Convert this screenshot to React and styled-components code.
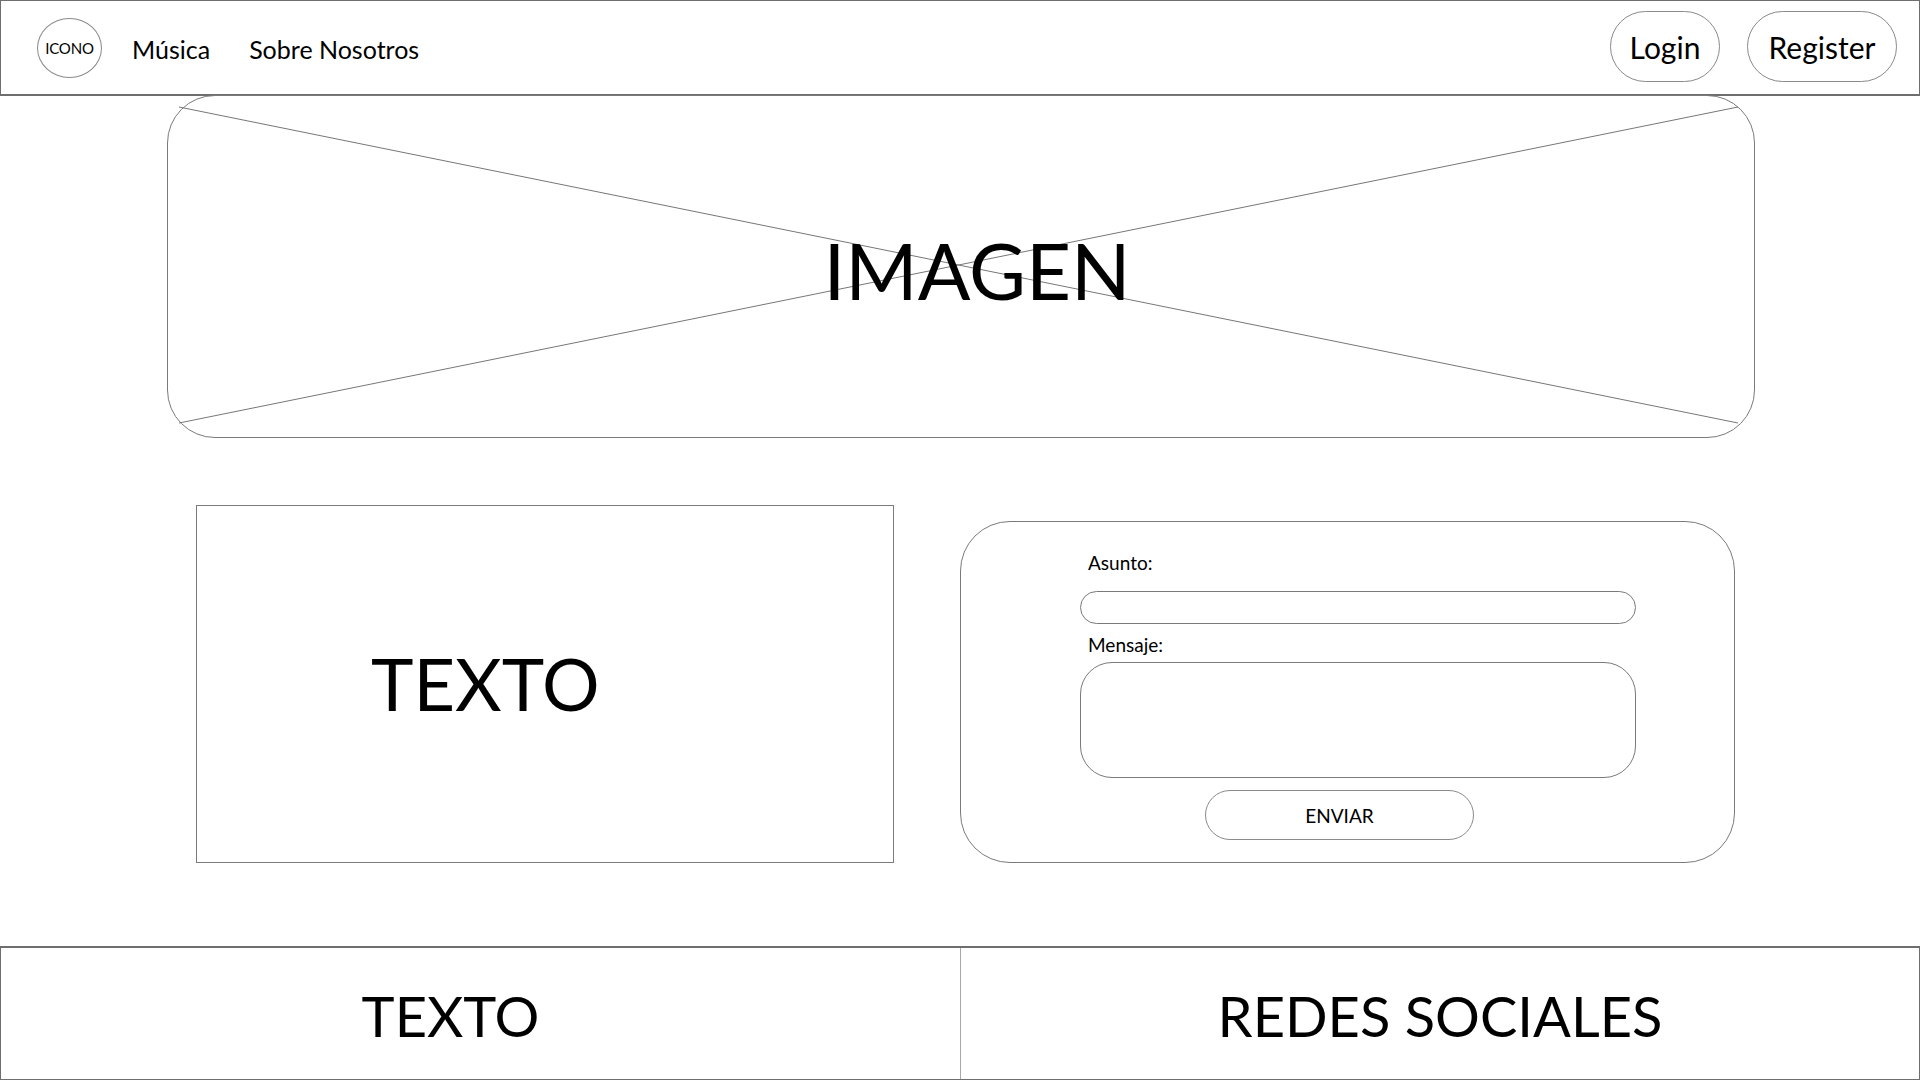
import React from "react";
import styled, { createGlobalStyle } from "styled-components";

const Global = createGlobalStyle`
  html, body { margin: 0; padding: 0; background: #fff; }
  body { font-family: "Lato", "Open Sans", sans-serif; color: #000; }
  * { box-sizing: border-box; }
`;

const Page = styled.div`
  width: 1920px;
  height: 1080px;
  display: flex;
  flex-direction: column;
  overflow: hidden;
`;

const Header = styled.header`
  height: 96px;
  border: 1px solid #6e6e6e;
  border-bottom-width: 2px;
  display: flex;
  align-items: center;
  padding: 0 22px 0 36px;
  flex-shrink: 0;
`;

const Logo = styled.div`
  width: 65px;
  height: 60px;
  border: 1px solid #8a8a8a;
  border-radius: 50%;
  display: flex;
  align-items: center;
  justify-content: center;
  font-size: 15px;
  letter-spacing: -0.2px;
`;

const Nav = styled.nav`
  display: flex;
  gap: 39px;
  margin-left: 30px;
  margin-top: 2px;
`;

const NavLink = styled.a`
  font-size: 25px;
  color: #000;
  text-decoration: none;
`;

const Actions = styled.div`
  margin-left: auto;
  display: flex;
  gap: 27px;
  margin-top: -2px;
`;

const PillButton = styled.button`
  width: ${(p) => p.$w}px;
  height: 71px;
  border: 1px solid #8a8a8a;
  border-radius: 36px;
  background: #fff;
  font-family: inherit;
  font-size: 30px;
  color: #000;
  padding: 0;
`;

const Hero = styled.section`
  position: relative;
  margin: -1px 0 0 167px;
  width: 1588px;
  height: 343px;
  border: 1px solid #7a7a7a;
  border-radius: 48px;
  display: flex;
  align-items: center;
  justify-content: center;
  padding-left: 32px;
  flex-shrink: 0;
`;

const Cross = styled.svg`
  position: absolute;
  inset: 0;
  pointer-events: none;
`;

const HeroTitle = styled.h1`
  position: relative;
  margin: 0;
  font-weight: 400;
  font-size: 78px;
  line-height: 1;
  margin-top: 6px;
`;

const ContentRow = styled.div`
  display: flex;
  align-items: flex-end;
  gap: 66px;
  margin: 67px 0 0 196px;
  flex-shrink: 0;
`;

const TextBox = styled.div`
  width: 698px;
  height: 358px;
  border: 1px solid #7a7a7a;
  display: flex;
  align-items: center;
  padding-left: 174px;
  padding-bottom: 2px;
  font-size: 72px;
`;

const FormCard = styled.form`
  width: 775px;
  height: 342px;
  border: 1px solid #7a7a7a;
  border-radius: 50px;
  display: flex;
  flex-direction: column;
  padding: 29px 0 0 119px;
`;

const Label = styled.label`
  font-size: 19px;
  padding-left: 8px;
  line-height: 24px;
`;

const SubjectInput = styled.div`
  width: 556px;
  height: 33px;
  border: 1px solid #7a7a7a;
  border-radius: 17px;
  margin: 16px 0 9px;
`;

const MessageBox = styled.div`
  width: 556px;
  height: 116px;
  border: 1px solid #7a7a7a;
  border-radius: 32px;
  margin-top: 5px;
`;

const SendButton = styled.button`
  align-self: flex-start;
  margin: 12px 0 0 125px;
  width: 269px;
  height: 50px;
  border: 1px solid #8a8a8a;
  border-radius: 25px;
  background: #fff;
  font-family: inherit;
  font-size: 19px;
  color: #000;
  padding: 0;
`;

const Footer = styled.footer`
  margin-top: auto;
  height: 134px;
  border-top: 2px solid #6e6e6e;
  border-bottom: 1px solid #6e6e6e;
  display: grid;
  grid-template-columns: 960px 1fr;
  flex-shrink: 0;
`;

const FooterCell = styled.div`
  display: flex;
  align-items: center;
  justify-content: center;
  font-size: 56px;
  padding-top: 4px;
  padding-right: ${(p) => p.$pr || 0}px;
  border-left: ${(p) => (p.$divider ? "1px solid #a8a8a8" : "1px solid #6e6e6e")};
  border-right: ${(p) => (p.$edge ? "1px solid #6e6e6e" : "none")};
`;

export default function App() {
  return (
    <Page>
      <Global />
      <Header>
        <Logo>ICONO</Logo>
        <Nav>
          <NavLink href="#">Música</NavLink>
          <NavLink href="#">Sobre Nosotros</NavLink>
        </Nav>
        <Actions>
          <PillButton $w={110}>Login</PillButton>
          <PillButton $w={150}>Register</PillButton>
        </Actions>
      </Header>

      <Hero>
        <Cross width="1588" height="343" viewBox="0 0 1588 343">
          <line x1="11" y1="11" x2="1570" y2="327" stroke="#777" strokeWidth="1" />
          <line x1="11" y1="327" x2="1570" y2="11" stroke="#777" strokeWidth="1" />
        </Cross>
        <HeroTitle>IMAGEN</HeroTitle>
      </Hero>

      <ContentRow>
        <TextBox>TEXTO</TextBox>
        <FormCard onSubmit={(e) => e.preventDefault()}>
          <Label>Asunto:</Label>
          <SubjectInput />
          <Label>Mensaje:</Label>
          <MessageBox />
          <SendButton type="button">ENVIAR</SendButton>
        </FormCard>
      </ContentRow>

      <Footer>
        <FooterCell $pr={60}>TEXTO</FooterCell>
        <FooterCell $divider $edge>REDES SOCIALES</FooterCell>
      </Footer>
    </Page>
  );
}
